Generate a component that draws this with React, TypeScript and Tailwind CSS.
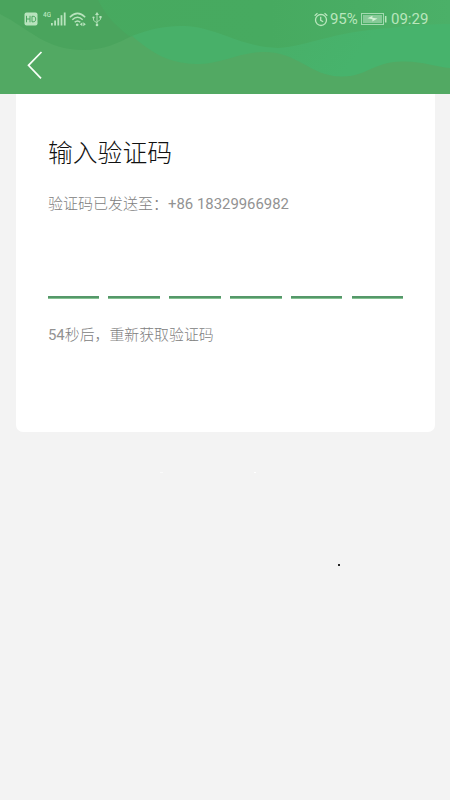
const sans = "font-['Roboto','Noto_Sans_CJK_SC',sans-serif]";

function HeaderWaves() {
  return (
    <svg className="absolute inset-0 h-full w-full" viewBox="0 0 450 94" aria-hidden="true">
      <defs>
        <linearGradient id="sky" x1="0" x2="1" y1="0" y2="0">
          <stop offset="0" stopColor="#47a95f" />
          <stop offset="0.6" stopColor="#47aa60" />
          <stop offset="1" stopColor="#4bb068" />
        </linearGradient>
        <linearGradient id="crest" gradientUnits="userSpaceOnUse" x1="300" x2="350" y1="25" y2="65">
          <stop offset="0" stopColor="#48b069" />
          <stop offset="1" stopColor="#47b36c" />
        </linearGradient>
      </defs>
      <rect width="450" height="94" fill="url(#sky)" />
      <path d="M0 0H98C106 16 116 27 132 38L90 60L0 30Z" fill="#4aa45d" />
      <path d="M132 36C150 29 166 25.500 184 26C217 27 240 47 278 48C310 46 330 32 390 28C414 25 432 24 450 24V94H180Z" fill="url(#crest)" />
      <path d="M0 14C30 29 45 50 84 50C103 50 118 43 132 36C148 49 164 63 196 64C223 64 235 53 262 52C298 51 309 76 341 76.500C366 77 373 62 402 61.500C423 61 435 67 450 68V94H0Z" fill="#52a963" />
    </svg>
  );
}

function HdIcon() {
  return (
    <svg width="14" height="14" viewBox="0 0 14 14" aria-hidden="true">
      <rect x="0.5" y="0.5" width="13" height="13" rx="2" fill="#b8e3bd" />
      <path d="M2.500 3.800v6.500M6 3.800v6.500M2.500 7H6M8 4.300v5.500h1.200c1.700 0 2.500-1 2.500-2.750S10.900 4.300 9.200 4.300Z" fill="none" stroke="#4ba660" strokeWidth="1" />
    </svg>
  );
}

function SignalIcon() {
  return (
    <svg width="15" height="14" viewBox="0 0 15 14" fill="#b8e3bd" aria-hidden="true">
      <rect x="0" y="11" width="1.8" height="2.5" />
      <rect x="3.200" y="8.500" width="1.8" height="5" />
      <rect x="6.400" y="6" width="1.8" height="7.500" />
      <rect x="9.600" y="3.200" width="1.8" height="10.300" />
      <rect x="12.800" y="0.500" width="1.8" height="13" />
    </svg>
  );
}

function WifiIcon() {
  return (
    <svg width="18" height="15" viewBox="0 0 18 15" fill="none" stroke="#b8e3bd" strokeWidth="1.5" aria-hidden="true">
      <path d="M.8 5.200Q8.500-2.400 16.200 5.200M3.300 7.800Q8.500 2.700 13.700 7.800M5.700 10.300Q8.500 7.600 11.300 10.300" />
      <circle cx="8.200" cy="12.700" r="1.300" fill="#b8e3bd" stroke="none" />
      <path d="M13.400 10.300v4l-2.600-2ZM14.300 10.300v4l2.500-2Z" fill="#b8e3bd" stroke="none" />
    </svg>
  );
}

function UsbIcon() {
  return (
    <svg width="10" height="15" viewBox="0 0 10 15" fill="none" stroke="#a9dcb0" aria-hidden="true">
      <path d="M5 2v11M1.500 6v2.300L5 11M8.500 5v2.500L5 10" />
      <path d="M5 0l2 3H3Z" fill="#b8e3bd" stroke="none" />
      <circle cx="5" cy="13" r="1.300" fill="#b8e3bd" stroke="none" />
      <circle cx="1.500" cy="5.500" r="1.100" fill="#b8e3bd" stroke="none" />
      <rect x="7.400" y="4" width="2.200" height="2.200" fill="#b8e3bd" stroke="none" />
    </svg>
  );
}

function AlarmIcon() {
  return (
    <svg width="14" height="15" viewBox="0 0 14 15" fill="none" stroke="#b9e6bd" strokeWidth="1.300" aria-hidden="true">
      <circle cx="7" cy="8" r="5.500" />
      <path d="M6.700 4.800v3.500l2.500 1.400M.7 3.700 3.500 1.200M13.300 3.700 10.500 1.200" />
    </svg>
  );
}

function BatteryIcon() {
  return (
    <svg width="26" height="12" viewBox="0 0 26 12" fill="none" aria-hidden="true">
      <rect x="0.500" y="0.500" width="22" height="11" stroke="#a3dab0" />
      <rect x="2" y="2" width="19" height="8" fill="#87ca98" />
      <path d="m6.500 5.200 5-2.500-.2 2.100 5.200.8-5.200 3 .2-2.400Z" fill="#d3f1d5" />
      <path d="M24.700 3v6.500" stroke="#b9e6bd" strokeWidth="1.500" />
    </svg>
  );
}

export default function App() {
  return (
    <main className={`relative h-[800px] w-[450px] overflow-hidden bg-[#f3f3f3] ${sans}`}>
      <header className="relative h-[94px] overflow-hidden">
        <HeaderWaves />
        <div className="relative flex h-[38px] items-center justify-between pl-[24px] pr-[22px] text-[#b9e6bd]">
          <div className="flex h-[15px] items-center">
            <HdIcon />
            <span className="ml-[5px] w-[8px] self-start text-[8px] font-medium leading-[6px]"><span className="inline-block origin-left scale-x-80">4G</span></span>
            <SignalIcon />
            <span className="ml-[3px]"><WifiIcon /></span>
            <span className="ml-[5px]"><UsbIcon /></span>
          </div>
          <div className="flex items-center text-[15px] leading-[18px]">
            <AlarmIcon />
            <span className="ml-[2px] w-[31px] whitespace-nowrap tracking-[-0.1px]">95%</span>
            <BatteryIcon />
            <span className="ml-[4px] w-[37px] whitespace-nowrap">09:29</span>
          </div>
        </div>
        <button className="relative ml-[27px] mt-[13px] block" aria-label="返回">
          <svg width="16" height="28" viewBox="0 0 16 28" fill="none" stroke="#f8fff8" strokeWidth="1.700" aria-hidden="true">
            <path d="M14.500 1 1.500 14.300 14 27.300" />
          </svg>
        </button>
      </header>

      <section className="ml-[16px] h-[337.500px] w-[419px] rounded-b-[7px] bg-white px-[32px] pt-[42px]">
        <h1 className="h-[36px] whitespace-nowrap text-[24.800px] font-light leading-[36px] text-[#111111]">输入验证码</h1>
        <p className="mt-[21px] h-[22px] whitespace-nowrap text-[15px] font-light leading-[22px] text-[#808080]">验证码已发送至<span className="inline-block">：</span><span className="text-[14.900px] font-normal text-[#929292]">+86 18329966982</span></p>
        <div className="-ml-[0.400px] mt-[81px] flex gap-[9.400px]">
          {[0, 1, 2, 3, 4, 5].map((slot) => (
            <span key={slot} className="h-[3px] w-[51.450px] shrink-0 border-b border-[#85c393] bg-[#559869]" />
          ))}
        </div>
        <p className="mt-[25px] h-[22px] whitespace-nowrap text-[14.900px] font-light leading-[22px] text-[#808080]"><span className="font-normal text-[#929292]">54</span>秒后，重新获取验证码</p>
      </section>
      <i className="absolute left-[160px] top-[472px] h-px w-[3px] bg-[#fafafa]" />
      <i className="absolute left-[254px] top-[472px] h-px w-[2px] bg-[#ffffff]" />
      <i className="absolute left-[338px] top-[564px] h-[2px] w-[2px] bg-[#242424]" />
    </main>
  );
}
